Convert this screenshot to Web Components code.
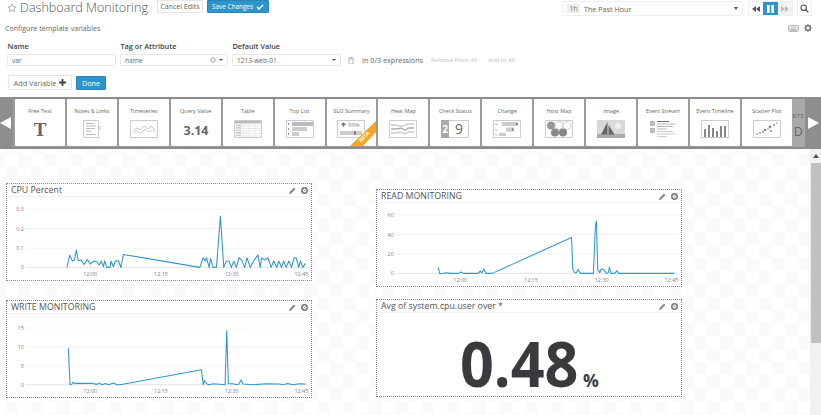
<!DOCTYPE html>
<html>
<head>
<meta charset="utf-8">
<title>Dashboard Monitoring</title>
<style>
  html, body { margin: 0; height: 100%; overflow: hidden; background: #fff; }
  body { font-family: "Open Sans", "Liberation Sans", sans-serif; color: #555; }
  tray-card svg { width: 100%; height: 100%; display: block; overflow: visible; }
</style>
</head>
<body>
<dash-page>
  <dash-topbar></dash-topbar>
  <template-vars></template-vars>
  <widget-tray>
    <tray-card label="Free Text"><svg viewBox="0 0 28 18"><text x="14" y="15.5" text-anchor="middle" font-family="Liberation Serif, serif" font-weight="700" font-size="19" fill="#666">T</text></svg></tray-card>
    <tray-card label="Notes &amp; Links"><svg viewBox="0 0 28 18"><path d="M5.5.5h15v17h-15z" fill="#fff" stroke="#ccc"/><path d="M21 6l1.5 2L21 10" fill="none" stroke="#aaa" stroke-width=".8"/><path d="M8 3.5h8M8 6h10M8 8.5h9M8 11h5M8 14.5h10" stroke="#bbb" stroke-width="1.1"/></svg></tray-card>
    <tray-card label="Timeseries"><svg viewBox="0 0 28 18"><path d="M.5.5h27v17H.5z" fill="#fff" stroke="#ccc"/><path d="M3 11l4-3 3 2 4-4 4 3 3-3 4 4" fill="none" stroke="#aaa" stroke-width=".7"/><path d="M3 13l4-2 4 2 4-4 4 3 3-2 3 2" fill="none" stroke="#bbb" stroke-width=".7"/></svg></tray-card>
    <tray-card label="Query Value"><svg viewBox="0 0 28 18"><text x="14" y="14.5" text-anchor="middle" font-family="Open Sans, sans-serif" font-weight="700" font-size="12.5" fill="#666">3.14</text></svg></tray-card>
    <tray-card label="Table"><svg viewBox="0 0 28 18"><path d="M.5.5h27v17H.5z" fill="#fff" stroke="#ccc"/><path d="M1 1h26v2.5H1z" fill="#bbb"/><path d="M1 6h26M1 8.500h26M1 11h26M1 13.500h26M1 16h26" stroke="#ddd" stroke-width=".7"/><path d="M9 3v14M15 3v14M21 3v14" stroke="#e2e2e2" stroke-width=".7"/><path d="M2 5.200h5M2 7.700h5M2 10.200h5M2 12.700h5M2 15.200h5" stroke="#aaa" stroke-width=".8"/></svg></tray-card>
    <tray-card label="Top List"><svg viewBox="0 0 28 18"><path d="M.5.500h27v17H.5z" fill="#fff" stroke="#ccc"/><path d="M6 2h21v4H6z" fill="#bbb"/><path d="M6 7h15v4H6z" fill="#ccc"/><path d="M6 12h7v4H6z" fill="#ccc"/><path d="M2.500 3v2M2.500 8v2M2.500 13v2" stroke="#888" stroke-width=".9"/></svg></tray-card>
    <tray-card label="SLO Summary" beta><svg viewBox="0 0 28 18"><path d="M.5.500h27v17H.5z" fill="#fff" stroke="#ccc"/><path d="M6.500 7V3.500M4.500 5l2-2 2 2" fill="none" stroke="#777" stroke-width="1.2"/><text x="11" y="7" font-family="Open Sans, sans-serif" font-size="6" fill="#888">99%</text><path d="M3 11h22v4H3z" fill="#ccc"/><path d="M17 11h2v4h-2z" fill="#888"/></svg></tray-card>
    <tray-card label="Heat Map"><svg viewBox="0 0 28 18"><path d="M.5.500h27v17H.5z" fill="#fff" stroke="#ccc"/><path d="M2 5h5l3 1h4l4-2h7" fill="none" stroke="#ccc" stroke-width="1.300"/><path d="M2 9h6l4-1 4 2 4-2h5" fill="none" stroke="#aaa" stroke-width="1.300"/><path d="M2 13h5l4-1 5 2 3-2h6" fill="none" stroke="#ccc" stroke-width="1.300"/></svg></tray-card>
    <tray-card label="Check Status"><svg viewBox="0 0 28 18"><path d="M.5.500h27v17H.5z" fill="#fff" stroke="#ccc"/><path d="M0 0h8v18H0z" fill="#aaa"/><text x="4" y="12.500" text-anchor="middle" font-family="Open Sans, sans-serif" font-weight="700" font-size="10" fill="#fff">2</text><text x="18" y="14" text-anchor="middle" font-family="Open Sans, sans-serif" font-size="14" fill="#666">9</text></svg></tray-card>
    <tray-card label="Change"><svg viewBox="0 0 28 18"><path d="M.5.500h27v17H.5z" fill="#fff" stroke="#ccc"/><path d="M9 2h16v4H9z" fill="#ccc"/><path d="M23 3h1.500v2H23z" fill="#777"/><path d="M13 7.500h8v4h-8z" fill="#ccc"/><path d="M19 8.500h1.500v2H19z" fill="#777"/><path d="M6 13h7v3H6z" fill="#ccc"/><path d="M2.500 3.500l1.500 1.500M2.500 9l1.500 1.500M2.500 14l1.500 1.500" stroke="#888" stroke-width=".9"/></svg></tray-card>
    <tray-card label="Host Map"><svg viewBox="0 0 28 18"><path d="M.5.500h27v17H.5z" fill="#fff" stroke="#ccc"/><circle cx="6" cy="5.500" r="4" fill="#999"/><circle cx="14" cy="5.500" r="4" fill="#fff" stroke="#bbb" stroke-width=".7"/><circle cx="22" cy="5.500" r="4" fill="#fff" stroke="#bbb" stroke-width=".7"/><circle cx="10" cy="12.500" r="4" fill="#888"/><circle cx="18" cy="12.500" r="4" fill="#888"/></svg></tray-card>
    <tray-card label="Image"><svg viewBox="0 0 28 18"><path d="M0 0h28v18H0z" fill="#d9d9d9"/><circle cx="21" cy="6" r="3" fill="#f0f0f0"/><path d="M0 14h28v4H0z" fill="#aaa"/><path d="M10.500 2v12.500H4zM11.500 5l6 9.500h-6z" fill="#666"/></svg></tray-card>
    <tray-card label="Event Stream"><svg viewBox="0 0 28 18"><path d="M1 1h5v5H1zM1 8h5v5H1z" fill="#bbb"/><path d="M8 1.500h12" stroke="#777" stroke-width="1.100"/><path d="M8 4h18M8 6.500h16M8 9h10" stroke="#bbb" stroke-width="1"/><path d="M8 11.500h16M8 14h18M8 16.500h10" stroke="#ccc" stroke-width="1"/></svg></tray-card>
    <tray-card label="Event Timeline"><svg viewBox="0 0 28 18"><path d="M.5.500h27v17H.5z" fill="#fff" stroke="#ccc"/><path d="M3 9h2v8H3zM7 5h2v12H7zM11 8h2v9h-2zM15 11h2v6h-2zM19 6h2v11h-2zM23 6h2v11h-2z" fill="#888"/></svg></tray-card>
    <tray-card label="Scatter Plot"><svg viewBox="0 0 28 18"><path d="M.5.500h27v17H.5z" fill="#fff" stroke="#ccc"/><g fill="#888"><circle cx="4" cy="14" r=".8"/><circle cx="7" cy="13" r=".9"/><circle cx="10" cy="12" r="1"/><circle cx="12" cy="10" r="1.300"/><circle cx="15" cy="9" r=".8"/><circle cx="17" cy="7" r="1.400"/><circle cx="18" cy="11" r="1"/><circle cx="21" cy="5" r="1"/><circle cx="24" cy="3" r=".8"/></g></svg></tray-card>
  </widget-tray>
  <dash-canvas>
    <div slot="left">
      <dash-widget name="CPU Percent">
        <line-chart view="18 65 918 253" base="277"
          yticks="0.3:102,0.2:160,0.1:219,0:277"
          points="200,277 208,240 216,258 222,255 228,225 234,257 243,255 252,268 261,253 270,267 280,258 290,260 297,270 303,258 310,275 313,257 320,277 330,277 332,258 340,275 345,258 355,257 362,277 370,238 600,277 610,248 616,258 620,248 628,277 632,250 640,277 650,277 662,122 672,277 680,258 688,258 695,277 702,258 710,277 718,248 726,255 735,277 742,248 752,277 762,258 775,239 782,277 786,248 795,255 805,248 815,277 822,258 832,277 838,258 846,277 852,258 860,277 868,258 876,277 884,248 890,248 898,277 903,258 910,277 918,265"></line-chart>
      </dash-widget>
      <dash-widget name="WRITE MONITORING">
        <line-chart view="18 55 918 253" base="268"
          yticks="15:97,10:154,5:211,0:268"
          points="204,158 209,268 215,266 218,261 225,264 260,264 275,264 290,267 298,263 305,268 316,264 325,268 340,263 350,268 360,268 605,223 610,268 614,255 620,265 628,268 640,265 676,268 681,105 686,265 700,265 710,268 718,266 724,254 730,266 760,268 800,265 840,266 850,268 865,264 880,268 900,265 918,266"></line-chart>
      </dash-widget>
    </div>
    <div slot="right">
      <dash-widget name="READ MONITORING">
        <line-chart view="18 70 918 253" base="282"
          yticks="60:106,40:165,20:224,0:282"
          points="204,265 208,282 215,283 225,280 240,282 265,282 272,278 280,282 325,282 330,274 335,281 341,269 347,282 366,282 605,174 609,270 615,280 620,280 625,270 632,282 671,282 677,140 680,124 684,270 690,280 695,268 703,272 710,282 716,280 719,264 724,282 735,282 742,274 747,282 915,282"></line-chart>
      </dash-widget>
      <dash-widget name="Avg of system.cpu.user over *">
        <query-value value="0.48" unit="%"></query-value>
      </dash-widget>
    </div>
  </dash-canvas>
</dash-page>

<script>
  // every element just stamps its markup into an open shadow root
  function shadow(el, html) {
    el.attachShadow({ mode: "open" }).innerHTML = html;
  }

  class DashPage extends HTMLElement {
    connectedCallback () {
      if (this.shadowRoot) return;
      shadow(this, `<style>
        :host { display: flex; flex-direction: column; height: 100vh; overflow: hidden; }
      </style><slot></slot>`);
    }
  }

  class UiButton extends HTMLElement {
    connectedCallback () {
      if (this.shadowRoot) return;
      shadow(this, `<style>
        :host { display: inline-flex; align-items: center; justify-content: center; gap: 3px; box-sizing: border-box;
          border: 1px solid #e6e6e6; border-radius: 1px; background: #fff; color: #666; white-space: nowrap; }
        :host([primary]) { background: #2c95cc; border-color: #2a86b8; color: #fff; }
      </style><slot></slot>`);
    }
  }

  class DashTopbar extends HTMLElement {
    connectedCallback () {
      if (this.shadowRoot) return;
      shadow(this, `<style>
        :host { display: flex; align-items: flex-start; height: 21px; padding: 0 9px 0 7px; flex: none; }
        .star { flex: none; width: 10px; height: 10px; margin: 3px 3px 0 0; }
        h1 { flex: none; margin: 0; font: 300 12.6px/16px "Open Sans", sans-serif; color: #555; width: 137px; white-space: nowrap; }
        .cancel { width: 46px; height: 13px; font-size: 7px; }
        .save { width: 62px; height: 13px; font-size: 6.4px; margin-left: 4px; }
        .spacer { flex: 1; }
        .range { display: flex; align-items: center; box-sizing: border-box; width: 181px; height: 15px; margin-top: 1px;
          border: 1px solid #eee; border-radius: 2px; font-size: 7.2px; color: #666; padding: 0 4px 0 4px; }
        .badge { background: #eee; color: #777; width: 13px; height: 9px; line-height: 9px; text-align: center; margin-right: 4px; }
        .grow { flex: 1; }
        .caret { width: 0; height: 0; border: 2.5px solid transparent; border-top: 3px solid #555; border-bottom: 0; }
        .player { display: flex; margin-left: 5px; margin-top: 1px; height: 15px; border: 1px solid #eee; box-sizing: border-box; width: 45px; }
        .player div { flex: 1; display: flex; align-items: center; justify-content: center; }
        .player .on { background: #2c95cc; }
        .player .off { background: #f3f3f3; }
        .search { width: 15px; height: 15px; box-sizing: border-box; margin: 1px 0 0 4px; border: 1px solid #eee; display: flex; align-items: center; justify-content: center; }
      </style>
      <svg class="star" viewBox="0 0 20 20"><path d="M10 2l2.400 5.200 5.600.7-4.100 3.900 1 5.600-4.900-2.800-4.900 2.800 1-5.600L2 7.900l5.600-.7z" fill="none" stroke="#888" stroke-width="1.300"/></svg>
      <h1>Dashboard Monitoring</h1>
      <ui-button class="cancel">Cancel Edits</ui-button>
      <ui-button class="save" primary>Save Changes
        <svg width="8" height="6" viewBox="0 0 8 6"><path d="M1 3l2 2 4-4" fill="none" stroke="#fff" stroke-width="1.600"/></svg></ui-button>
      <div class="spacer"></div>
      <div class="range"><span class="badge">1h</span><span class="grow">The Past Hour</span><span class="caret"></span></div>
      <div class="player">
        <div><svg width="8" height="6" viewBox="0 0 8 6"><path d="M4 0v6L0 3zM8 0v6L4 3z" fill="#555"/></svg></div>
        <div class="on"><svg width="7" height="8" viewBox="0 0 7 8"><path d="M0 0h2.700v8H0zM4.300 0H7v8H4.300z" fill="#fff"/></svg></div>
        <div class="off"><svg width="8" height="6" viewBox="0 0 8 6"><path d="M0 0v6l4-3zM4 0v6l4-3z" fill="#bbb"/></svg></div>
      </div>
      <div class="search"><svg width="9" height="9" viewBox="0 0 9 9"><circle cx="3.700" cy="3.700" r="2.700" fill="none" stroke="#555" stroke-width="1.100"/><path d="M5.700 5.700L8.300 8.300" stroke="#555" stroke-width="1.300"/></svg></div>`);
    }
  }

  class TemplateVars extends HTMLElement {
    connectedCallback () {
      if (this.shadowRoot) return;
      shadow(this, `<style>
        :host { display: block; flex: none; height: 76px; box-sizing: border-box; font-size: 7.2px; color: #666; }
        .head { display: flex; align-items: center; height: 14px; padding: 0 9px 0 5px; font-size: 7.1px; }
        .head .spacer { flex: 1; }
        .head svg { display: block; }
        .form { display: grid; grid-template-columns: 109px 108px 109px auto; column-gap: 4px; padding: 5px 0 0 7px; }
        label { font-weight: 600; font-size: 7.3px; line-height: 12px; height: 14px; color: #444; padding-left: .5px; }
        .field { display: flex; align-items: center; box-sizing: border-box; height: 12px; border: 1px solid #e8e8e8; border-radius: 1px; padding: 0 4px; font-size: 6.6px; color: #666; }
        .field span { flex: 1; }
        .caret { flex: none; width: 0; height: 0; border: 2px solid transparent; border-top: 2.500px solid #555; border-bottom: 0; margin-left: 3px; }
        .extra { display: flex; align-items: center; height: 12px; padding-left: 3px; white-space: nowrap; }
        .extra svg { margin-right: 8px; }
        .link { font-size: 5.900px; color: #bbb; margin-left: 8px; }
        .link + .link { margin-left: 11px; }
        .actions { display: flex; align-items: center; gap: 4px; padding: 9px 0 0 8px; }
        .add { width: 64px; height: 15px; font-size: 7.2px; }
        .done { width: 30px; height: 14px; font-size: 7.2px; }
      </style>
      <div class="head"><span>Configure template variables</span><span class="spacer"></span>
        <svg width="11" height="7" viewBox="0 0 11 7"><rect x=".5" y=".5" width="10" height="6" rx="1" fill="#ddd" stroke="#bbb"/><path d="M3 5h5" stroke="#999"/></svg>
        <svg style="margin-left:5px" width="8" height="8" viewBox="0 0 8 8"><circle cx="4" cy="4" r="2.200" fill="none" stroke="#777" stroke-width="1.400"/><path d="M4 0v1.500M4 6.500V8M0 4h1.500M6.500 4H8M1.200 1.200l1 1M5.800 5.800l1 1M1.200 6.800l1-1M5.800 2.200l1-1" stroke="#777" stroke-width="1.100"/></svg>
      </div>
      <div class="form">
        <label>Name</label><label>Tag or Attribute</label><label>Default Value</label><span></span>
        <div class="field"><span>var</span></div>
        <div class="field"><span>name</span>
          <svg width="6" height="6" viewBox="0 0 6 6"><circle cx="3" cy="3" r="2.200" fill="none" stroke="#999"/></svg><i class="caret"></i></div>
        <div class="field"><span>1213-web-01</span><i class="caret"></i></div>
        <div class="extra">
          <svg width="6" height="7" viewBox="0 0 6 7"><path d="M0 1h6M2 .5h2M1 2h4v5H1z" fill="none" stroke="#aaa" stroke-width=".8"/></svg>
          <span>In 0/3 expressions</span><span class="link">Remove From All</span><span class="link">Add to All</span>
        </div>
      </div>
      <div class="actions">
        <ui-button class="add">Add Variable
          <svg width="7" height="7" viewBox="0 0 7 7"><path d="M3.500 0v7M0 3.500h7" stroke="#444" stroke-width="1.800"/></svg></ui-button>
        <ui-button class="done" primary>Done</ui-button>
      </div>`);
    }
  }

  class WidgetTray extends HTMLElement {
    connectedCallback () {
      if (this.shadowRoot) return;
      shadow(this, `<style>
        :host { display: flex; flex: none; height: 52px; box-sizing: border-box; background: #9b9b9b; border-top: 2px solid #8c8c8c; border-bottom: 2px solid #8c8c8c; }
        .arrow { flex: none; display: flex; align-items: center; justify-content: center; background: #8e8e8e; }
        .left { width: 13px; justify-content: flex-start; }
        .right { width: 16px; }
        .cards { flex: none; display: flex; gap: 2px; padding: 0 0 0 2px; }
        .rest { flex: 1; background: #a9a9a9; overflow: hidden; }
        .rest svg { display: block; }
        .rest text { font: 400 6px "Liberation Sans", sans-serif; fill: #666; }
      </style>
      <div class="arrow left"><svg width="11" height="12" viewBox="0 0 11 12"><path d="M11 0v12L0 6z" fill="#fff"/></svg></div>
      <div class="cards"><slot></slot></div>
      <div class="rest"><svg width="13" height="48" viewBox="0 0 13 48"><text x="0.500" y="19">ET5</text><text x="2" y="37" style="font-size:12px">D</text></svg></div>
      <div class="arrow right"><svg width="11" height="12" viewBox="0 0 11 12"><path d="M0 0v12l11-6z" fill="#fff"/></svg></div>`);
    }
  }

  class TrayCard extends HTMLElement {
    connectedCallback () {
      if (this.shadowRoot) return;
      const beta = this.hasAttribute("beta") ? `
        <svg class="ribbon" width="26" height="25" viewBox="0 0 26 25"><path d="M26 0v11L13 25H0z" fill="#f5a623"/>
          <text x="0" y="0" transform="translate(15.500 17) rotate(-45)" text-anchor="middle" font-family="Open Sans, sans-serif" font-weight="700" font-size="5" fill="#fff">BETA</text></svg>` : "";
      shadow(this, `<style>
        :host { display: flex; flex-direction: column; align-items: center; position: relative; overflow: hidden; box-sizing: border-box;
          width: 49.93px; height: 47px; background: #fff; border-radius: 1px; }
        .label { font-size: 5.500px; line-height: 8px; color: #666; margin-top: 8px; white-space: nowrap; }
        .icon { width: 28px; height: 18px; margin-top: 5px; }
        .ribbon { position: absolute; right: 0; bottom: 0; }
      </style>
      <div class="label">${this.getAttribute("label")}</div>
      <div class="icon"><slot></slot></div>${beta}`);
    }
  }

  class DashCanvas extends HTMLElement {
    connectedCallback () {
      if (this.shadowRoot) return;
      shadow(this, `<style>
        :host { display: flex; flex: 1; min-height: 0; overflow: hidden;
          background: repeating-conic-gradient(#fafafa 0 25%, #fff 0 50%) 5px 5px / 26px 26px; }
        .cols { flex: 1; display: flex; align-items: flex-start; padding-left: 6px; }
        ::slotted([slot="left"]) { display: flex; flex-direction: column; gap: 19px; width: 306px; padding-top: 34px; }
        ::slotted([slot="right"]) { display: flex; flex-direction: column; gap: 12px; width: 306px; margin-left: 64px; padding-top: 40px; }
        .bar { flex: none; width: 11px; background: #f1f1f1; display: flex; flex-direction: column; align-items: center; }
        .bar i { width: 0; height: 0; border: 3px solid transparent; border-bottom: 4px solid #505050; border-top: 0; margin-top: 5px; }
        .bar b { display: block; width: 10px; height: 180px; margin-top: 5px; background: #c1c1c1; }
      </style>
      <div class="cols"><slot name="left"></slot><slot name="right"></slot></div>
      <div class="bar"><i></i><b></b></div>`);
    }
  }

  class DashWidget extends HTMLElement {
    connectedCallback () {
      if (this.shadowRoot) return;
      shadow(this, `<style>
        :host { display: block; box-sizing: border-box; width: 306px; height: 98px; background: #fff; border: 1px dotted #888; }
        header { display: flex; align-items: center; height: 13px; box-sizing: border-box; border-bottom: 1px solid #f0f0f0; padding: 0 3px 0 4px; }
        .name { flex: 1; font-size: 8.800px; line-height: 12px; color: #555; white-space: nowrap; }
        svg { display: block; margin-left: 5px; }
      </style>
      <header><span class="name">${this.getAttribute("name")}</span>
        <svg width="7" height="7" viewBox="0 0 7 7"><path d="M0 7l.5-2L5 .5 6.500 2 2 6.500z" fill="#888"/></svg>
        <svg width="7" height="7" viewBox="0 0 7 7"><circle cx="3.500" cy="3.500" r="2.700" fill="none" stroke="#777" stroke-width="1.500"/><path d="M2.400 2.400l2.200 2.200M4.600 2.400L2.400 4.600" stroke="#777" stroke-width=".6"/></svg>
      </header>
      <slot></slot>`);
    }
  }

  class LineChart extends HTMLElement {
    connectedCallback () {
      if (this.shadowRoot) return;
      // view, ticks and points are all in 3x units, same scale as the stroke and font sizes below
      const base = +this.getAttribute("base");
      const [vx, vy, vw, vh] = this.getAttribute("view").split(" ").map(Number);
      const ticks = this.getAttribute("yticks").split(",").map((t) => t.split(":"));
      const grid = ticks.map(([label, y]) => `
        <path d="M75 ${y}H925" stroke="${+label === 0 ? "#e4e4e4" : "#f2f2f2"}" stroke-width="3"/>
        <text x="70" y="${+y + 6}" text-anchor="end">${label}</text>`).join("");
      const times = [["12:00", 270], ["12:15", 483], ["12:30", 696], ["12:45", 906]].map(([label, x]) => `
        <path d="M${x} ${base}v5" stroke="#ddd" stroke-width="2"/>
        <text x="${x}" y="${base + 25}" text-anchor="middle">${label}</text>`).join("");
      shadow(this, `<style>
        :host { display: block; height: 84px; overflow: hidden; }
        svg { display: block; width: 304px; height: 84px; }
        text { font: 16.500px "Open Sans", sans-serif; fill: #808080; }
      </style>
      <svg viewBox="${vx + 3} ${vy} ${vw - 6} ${vh}">${grid}${times}
        <polyline points="${this.getAttribute("points")}" fill="none" stroke="#2f97cf" stroke-width="3.200" stroke-linejoin="round"/>
      </svg>`);
    }
  }

  class QueryValue extends HTMLElement {
    connectedCallback () {
      if (this.shadowRoot) return;
      shadow(this, `<style>
        :host { display: flex; align-items: baseline; height: 84px; box-sizing: border-box; padding: 16px 0 0 83px;
          font-family: "Open Sans", sans-serif; font-weight: 700; color: #3a3a3e; line-height: 68px; }
        .value { display: inline-block; font-size: 63px; transform: scaleX(.94); transform-origin: left; margin-right: -8px; }
        .unit { font-size: 17.500px; margin-left: 5px; }
      </style>
      <span class="value">${this.getAttribute("value")}</span><span class="unit">${this.getAttribute("unit")}</span>`);
    }
  }

  customElements.define("ui-button", UiButton);
  customElements.define("dash-page", DashPage);
  customElements.define("dash-topbar", DashTopbar);
  customElements.define("template-vars", TemplateVars);
  customElements.define("widget-tray", WidgetTray);
  customElements.define("tray-card", TrayCard);
  customElements.define("dash-canvas", DashCanvas);
  customElements.define("dash-widget", DashWidget);
  customElements.define("line-chart", LineChart);
  customElements.define("query-value", QueryValue);
</script>
</body>
</html>
